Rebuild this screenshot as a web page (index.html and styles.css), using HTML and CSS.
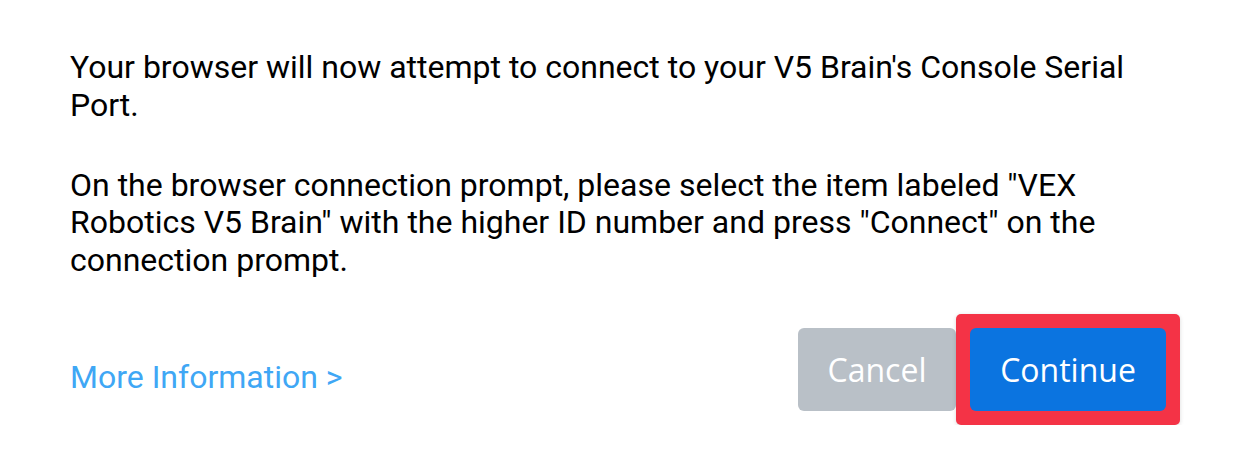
FILE: index.html
```html
<!doctype html>
<html lang="en">
<head>
    <meta charset="UTF-8">
    <title>Connect</title>
    <link rel="stylesheet" href="styles.css">
</head>
<body>
<div id="dialog">
    <p>Your browser will now attempt to connect to your V5 Brain's Console Serial Port.</p>
    <p>On the browser connection prompt, please select the item labeled "VEX Robotics V5 Brain" with the higher ID number and press "Connect" on the connection prompt.</p>
    <div class="footer">
        <a class="more" href="#">More Information &gt;</a>
        <div class="buttons">
            <button class="btn cancel">Cancel</button>
            <span class="highlight"><button class="btn continue">Continue</button></span>
        </div>
    </div>
</div>
</body>
</html>
```

FILE: styles.css
```css
body{
    margin:0;
    background-color:#fff;
    font-family: Roboto, "Liberation Sans", sans-serif;
    color:#000;
}

#dialog{
    width:1110px;
    padding:49px 0 0 70px;
}

p{
    margin:0 0 42.5px;
    font-size:32px;
    line-height:37.5px;
}

.footer{
    display:flex;
    justify-content:space-between;
    align-items:center;
    margin-top:-8px;
}
.more{
    color:#3fa7f5;
    text-decoration:none;
    font-size:32px;
    margin-top:16px;
}
.buttons{
    display:flex;
    align-items:center;
}
.btn{
    height:83px;
    border:none;
    border-radius:6px;
    padding:0 20px;
    font-family: "Open Sans", "Noto Sans", sans-serif;
    font-size:32px;
    color:#fff;
    cursor:pointer;
}
.cancel{
    width:158px;
    background-color:#b9c0c7;
}
.highlight{
    display:flex;
    padding:14px;
    background-color:#f43346;
    border-radius:5px;
    box-shadow: 0 1px 4px rgba(0,0,0,.15);
}
.continue{
    width:196px;
    background-color:#0b74e0;
}
```
